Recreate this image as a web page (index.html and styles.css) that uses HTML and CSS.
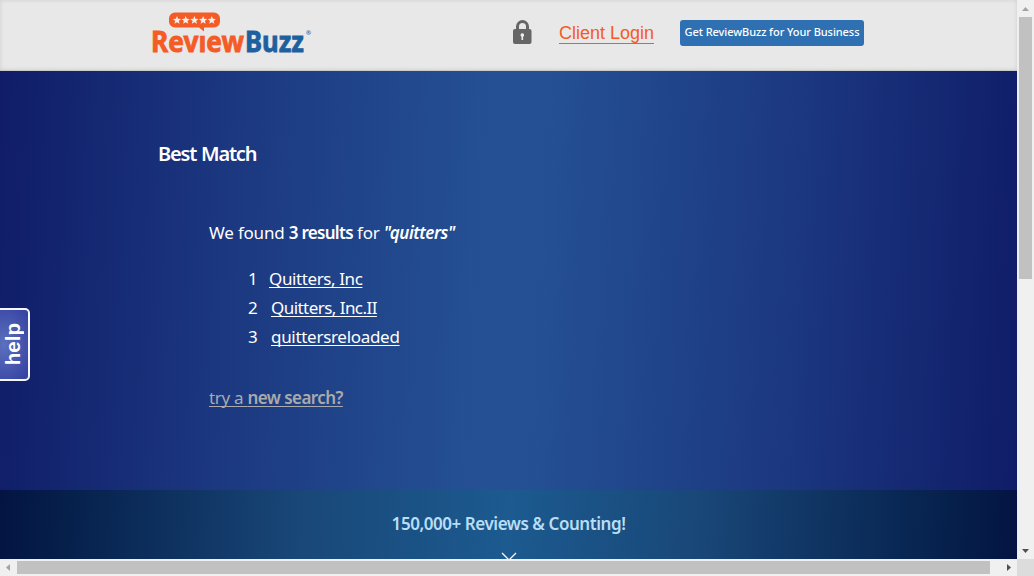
FILE: index.html
```html
<!DOCTYPE html>
<html lang="en">
<head>
<meta charset="utf-8">
<title>ReviewBuzz</title>
<link rel="stylesheet" href="styles.css">
</head>
<body>
<div class="window">
  <div class="page">
    <header class="header">
      <svg class="logo" width="160" height="46" viewBox="0 0 160 46" role="img" aria-label="ReviewBuzz">
        <text class="word review" x="-1" y="40" textLength="93" lengthAdjust="spacingAndGlyphs">Review</text>
        <text class="word buzz" x="93" y="40" textLength="59" lengthAdjust="spacingAndGlyphs">Buzz</text>
        <rect class="gap" x="47" y="16" width="9" height="7.500"/>
        <path class="bubble" d="M23 .5h39a6 6 0 0 1 6 6v3a6 6 0 0 1-6 6H52v4l-5-4H23a6 6 0 0 1-6-6v-3a6 6 0 0 1 6-6z"/>
        <g class="stars">
          <path id="star" d="M25 4l1.1 2.8 3 .2-2.3 1.9.8 2.9-2.6-1.6-2.6 1.6.8-2.9L20.900 7l3-.2z"/>
          <use href="#star" x="8.700"/><use href="#star" x="17.400"/><use href="#star" x="26.100"/><use href="#star" x="34.800"/>
        </g>
        <text class="reg" x="154" y="23">®</text>
      </svg>
      <svg class="lock" width="19" height="25" viewBox="0 0 19 25" aria-hidden="true">
        <path class="shackle" d="M4.500 11V6.500a5 5 0 0 1 10 0V11"/>
        <rect class="lockbody" y="9" width="18.500" height="15" rx="2"/>
        <path class="keyhole" d="M9.300 13.300a1.800 1.800 0 0 1 .8 3.400V20H8.500v-3.300a1.800 1.800 0 0 1 .8-3.400z"/>
      </svg>
      <a class="login">Client Login</a>
      <a class="cta">Get ReviewBuzz for Your Business</a>
    </header>
    <main class="results">
      <h1 class="title">Best Match</h1>
      <p class="found">We found <b>3 results</b> for <b class="query">"quitters"</b></p>
      <ol class="list">
        <li><span class="num">1</span><a class="r1">Quitters, Inc</a></li>
        <li><span class="num">2</span><a class="r2">Quitters, Inc.II</a></li>
        <li><span class="num">3</span><a class="r3">quittersreloaded</a></li>
      </ol>
      <a class="again">try a <b>new search?</b></a>
    </main>
    <section class="counter">
      <p class="count">150,000+ Reviews &amp; Counting!</p>
      <svg class="chevron" width="16" height="9" viewBox="0 0 16 9" aria-hidden="true"><path d="M1 1l7 7 7-7"/></svg>
    </section>
    <div class="help"><span>help</span></div>
  </div>
  <div class="vbar">
    <svg width="17" height="17"><path class="off" d="M5 11h7L8.500 7z"/></svg>
    <div class="vthumb"></div>
    <svg width="17" height="17"><path class="on" d="M5 7h7l-3.500 4z"/></svg>
  </div>
  <div class="hbar">
    <svg width="17" height="17"><path class="off" d="M10 5v7L6 8.500z"/></svg>
    <div class="hthumb"></div>
    <svg width="17" height="17"><path class="on" d="M7 5v7l4-3.500z"/></svg>
  </div>
  <div class="corner"></div>
</div>
</body>
</html>
```
FILE: styles.css
```css
* { box-sizing: border-box; }
body { margin: 0; font-family: "Noto Sans", sans-serif; }
.window { display: grid; grid-template: 559px 17px / 1017px 17px; width: 1034px; height: 576px; overflow: hidden; }
.page { position: relative; display: flex; flex-direction: column; overflow: hidden; }
.header { display: flex; align-items: flex-start; height: 71px; padding-left: 152px; background: #e8e8e8; box-shadow: inset 0 0 4px #ccc; border-bottom: 1px solid #c9cdc9; }
.logo { margin-top: 12px; overflow: visible; flex: none; }
.gap { fill: #e8e8e8; }
.bubble { fill: #f45b25; }
.stars { fill: #f2eeec; }
.word { font: bold 29px "Noto Sans", sans-serif; stroke-width: .8; }
.review { fill: #f45b25; stroke: #f45b25; }
.buzz { fill: #1d609f; stroke: #1d609f; }
.reg { font: bold 6px "Noto Sans", sans-serif; fill: #1d609f; }
.lock { margin: 20px 0 0 201px; flex: none; }
.shackle { fill: none; stroke: #666; stroke-width: 3; }
.lockbody { fill: #666; }
.keyhole { fill: #eee; }
.login { margin: 22px 0 0 27px; width: 95px; height: 22px; font: 18px/22px "Liberation Sans", Arial, sans-serif; color: #f45b25; border-bottom: 1px solid #f45b25; white-space: nowrap; }
.cta { margin: 20px 0 0 26px; width: 184px; height: 26px; border-radius: 3px; background: #2e70b1; color: #fff; font-size: 11px; font-weight: 500; line-height: 24px; letter-spacing: -.07px; text-align: center; white-space: nowrap; }
.results { height: 419px; padding: 69px 0 0 158px; color: #fff; background: linear-gradient(93deg, #101c68 0%, #1b377f 22%, #255194 48%, #255194 52%, #1b377f 78%, #101c68 100%); }
.title { margin: 0; font-size: 20px; line-height: 28px; font-weight: 600; letter-spacing: -1.2px; word-spacing: 1px; }
.found { margin: 51px 0 0 51px; font-size: 17px; line-height: 28px; letter-spacing: -.2px; white-space: nowrap; }
.found b { font-weight: 600; letter-spacing: -.7px; }
.found .query { font-style: italic; letter-spacing: -.45px; }
.list { margin: 17px 0 0 90px; padding: 0; list-style: none; font-size: 17px; line-height: 29px; }
.list li { display: flex; }
.num { width: 21px; }
.list li + li .num { width: 23px; }
.r1 { letter-spacing: -.4px; }
.r2 { letter-spacing: -.55px; }
.r3 { letter-spacing: -.3px; }
.list a, .again { text-decoration: underline; text-underline-offset: 2px; text-decoration-thickness: 1px; text-decoration-skip-ink: none; }
.again { display: block; width: max-content; margin: 32px 0 0 51px; color: #aaa; font-size: 17px; line-height: 30px; letter-spacing: -.3px; }
.again b { font-weight: 600; letter-spacing: -.55px; }
.counter { display: flex; flex-direction: column; align-items: center; height: 69px; overflow: hidden; background: linear-gradient(93deg, #041442 0%, #06204c 7%, #194879 30%, #1c5a8f 50%, #194879 68%, #06204c 93%, #041442 100%); }
.count { margin: 20px 0 0; color: #b8def5; font-size: 17px; line-height: 28px; font-weight: 600; letter-spacing: -.45px; white-space: nowrap; }
.chevron { margin-top: 14px; flex: none; fill: none; stroke: #fff; stroke-width: 1.3; }
.help { position: absolute; left: -4px; top: 308px; width: 34px; height: 73px; display: flex; align-items: center; justify-content: center; border: 2px solid #f5f6ff; border-radius: 5px; background: radial-gradient(ellipse at 20% 50%, #5c70be, #3340a0); }
.help span { writing-mode: vertical-rl; transform: rotate(180deg); color: #fff; font: bold 20.5px/24px "Liberation Sans", Arial, sans-serif; }
.vbar, .hbar { display: flex; background: #f0f0f0; }
.vbar { flex-direction: column; justify-content: space-between; }
.hbar { justify-content: space-between; }
.vthumb { width: 13px; height: 262px; margin: 0 0 auto 2px; background: #c1c1c1; }
.hthumb { width: 973px; height: 13px; margin: 2px auto 0 0; background: #c1c1c1; }
.off { fill: #a3a3a3; }
.on { fill: #505050; }
.corner { background: #dcdcdc; }
```
